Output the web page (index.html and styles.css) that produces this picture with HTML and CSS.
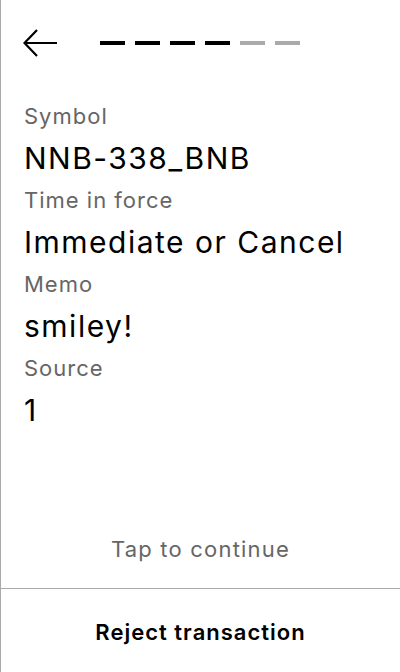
FILE: index.html
```html
<!DOCTYPE html>
<html lang="en">
<head>
<meta charset="utf-8">
<link rel="stylesheet" href="styles.css">
</head>
<body>
<div class="screen">
  <header class="header">
    <svg class="back" width="36" height="30" viewBox="0 0 36 30">
      <path d="M34 15H2M14 2L1.5 15L14 28" fill="none" stroke="#000" stroke-width="2.2"/>
    </svg>
    <div class="steps">
      <span class="step done"></span>
      <span class="step done"></span>
      <span class="step done"></span>
      <span class="step done"></span>
      <span class="step"></span>
      <span class="step"></span>
    </div>
  </header>
  <main class="content">
    <div class="label">Symbol</div>
    <div class="value">NNB-338_BNB</div>
    <div class="label">Time in force</div>
    <div class="value">Immediate or Cancel</div>
    <div class="label">Memo</div>
    <div class="value">smiley!</div>
    <div class="label">Source</div>
    <div class="value">1</div>
  </main>
  <div class="tap">Tap to continue</div>
  <footer class="footer">Reject transaction</footer>
</div>
</body>
</html>
```
FILE: styles.css
```css
html, body {
  margin: 0;
  padding: 0;
  background: #fff;
}
body {
  font-family: Inter, "Noto Sans", sans-serif;
  color: #000;
}
.screen {
  height: 672px;
  box-sizing: border-box;
  border-left: 1px solid #aaa;
  display: flex;
  flex-direction: column;
}
.header {
  height: 86px;
  display: flex;
  align-items: center;
  padding-left: 22px;
  flex-shrink: 0;
}
.back {
  display: block;
}
.steps {
  display: flex;
  gap: 10px;
  margin-left: 41px;
}
.step {
  width: 25px;
  height: 4px;
  background: #aaa;
}
.step.done {
  background: #000;
}
.content {
  flex: 1;
  padding: 13px 0 0 23px;
}
.label {
  font-size: 22px;
  line-height: 34px;
  letter-spacing: 1px;
  color: #666;
}
.value {
  font-size: 30px;
  line-height: 50px;
  letter-spacing: 1.5px;
}
.tap {
  text-align: center;
  font-size: 22px;
  line-height: 40px;
  letter-spacing: 1.2px;
  color: #666;
  margin-bottom: 19px;
}
.footer {
  border-top: 1px solid #aaa;
  height: 84px;
  box-sizing: border-box;
  padding-top: 31px;
  text-align: center;
  font-size: 22px;
  line-height: 24px;
  letter-spacing: 1px;
  font-weight: 600;
}
```
